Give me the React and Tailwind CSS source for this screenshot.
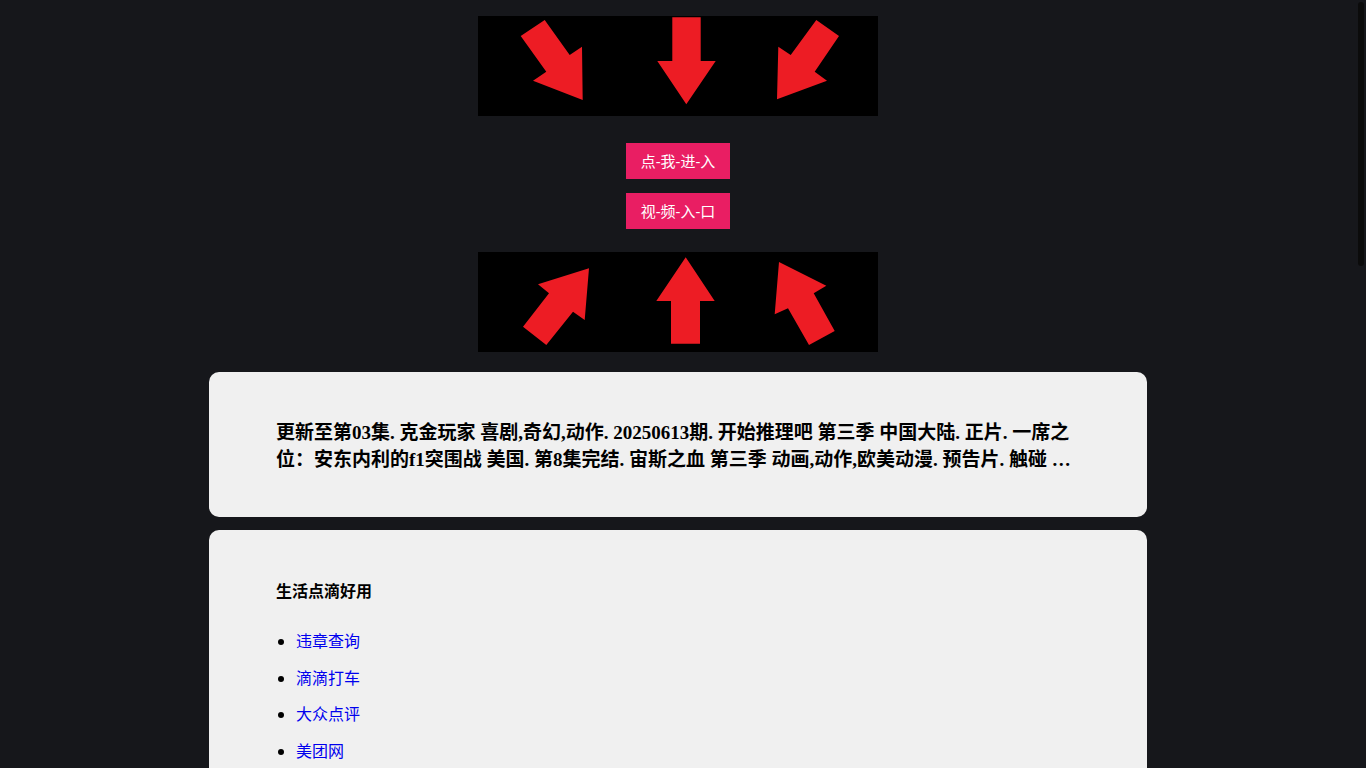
import React from "react";

const RED = "#ed1c24";

function DownArrows() {
  return (
    <svg width="400" height="100" viewBox="0 0 400 100" className="block bg-black">
      <polygon fill={RED} points="42.7,20 66.7,4 91.7,39 104,30.7 104.7,84 55,64.7 68.3,55.7" />
      <polygon fill={RED} points="194.3,1.3 222.7,1.3 222.7,45 237.7,45 208.3,88.3 179.3,45 194.3,45" />
      <polygon fill={RED} points="338.3,4 361,20 336.7,55.7 349,64.7 299,83.3 300.3,30.7 312.7,39" />
    </svg>
  );
}

function UpArrows() {
  return (
    <svg width="400" height="100" viewBox="0 0 400 100" className="block bg-black">
      <polygon fill={RED} points="60,32.3 111,16.3 106.7,68 95,59.7 68.3,93 45,74.7 71,41.3" />
      <polygon fill={RED} points="207.7,5.3 236.7,49 222,49 222,91.7 193,91.7 193,49 178.3,49" />
      <polygon fill={RED} points="301,10 348.3,33.7 335.7,41.3 356.7,79 331,93 310,56.3 296.7,62.3" />
    </svg>
  );
}

const summary =
  "更新至第03集. 克金玩家 喜剧,奇幻,动作. 20250613期. 开始推理吧 第三季 中国大陆. 正片. 一席之位：安东内利的f1突围战 美国. 第8集完结. 宙斯之血 第三季 动画,动作,欧美动漫. 预告片. 触碰 …";

const links = ["违章查询", "滴滴打车", "大众点评", "美团网"];

export default function App() {
  return (
    <div
      className="min-h-screen bg-[#16171b]"
      style={{ fontFamily: '"Noto Sans", "Noto Sans CJK SC", sans-serif' }}
    >
      <div className="flex w-[1356px] flex-col items-center pt-[16px] pb-[40px]">
        <DownArrows />
        <a className="mt-[27px] flex h-[36px] w-[104px] items-center justify-center bg-[#e91e63] text-[15px] text-white">
          点-我-进-入
        </a>
        <a className="mt-[14px] flex h-[36px] w-[104px] items-center justify-center bg-[#e91e63] text-[15px] text-white">
          视-频-入-口
        </a>
        <div className="mt-[23px]">
          <UpArrows />
        </div>

        <div className="mt-[20px] w-[938px] rounded-[10px] bg-[#f0f0f0] px-[67px] pt-[47px] pb-[44px]">
          <h3
            className="line-clamp-2 text-[19px] font-bold leading-[27px] text-black"
            style={{ fontFamily: '"Liberation Serif", "Noto Sans CJK SC", serif' }}
          >
            {summary}
          </h3>
        </div>

        <div className="mt-[13px] min-h-[1630px] w-[938px] rounded-[10px] bg-[#f0f0f0] px-[67px] pt-[50px] pb-[40px]">
          <h4 className="text-[16px] font-bold leading-[22px] text-black">生活点滴好用</h4>
          <ul className="mt-[27px] flex list-disc flex-col gap-[12.7px] pl-[20px] text-[16px] leading-[24px] text-black">
            {links.map((l) => (
              <li key={l}>
                <a className="text-[#0000ee]">{l}</a>
              </li>
            ))}
          </ul>
        </div>
      </div>
      <div className="fixed top-[2px] right-[2px] h-[264px] w-[6px] rounded-full bg-[#0b0b0b]" />
    </div>
  );
}
